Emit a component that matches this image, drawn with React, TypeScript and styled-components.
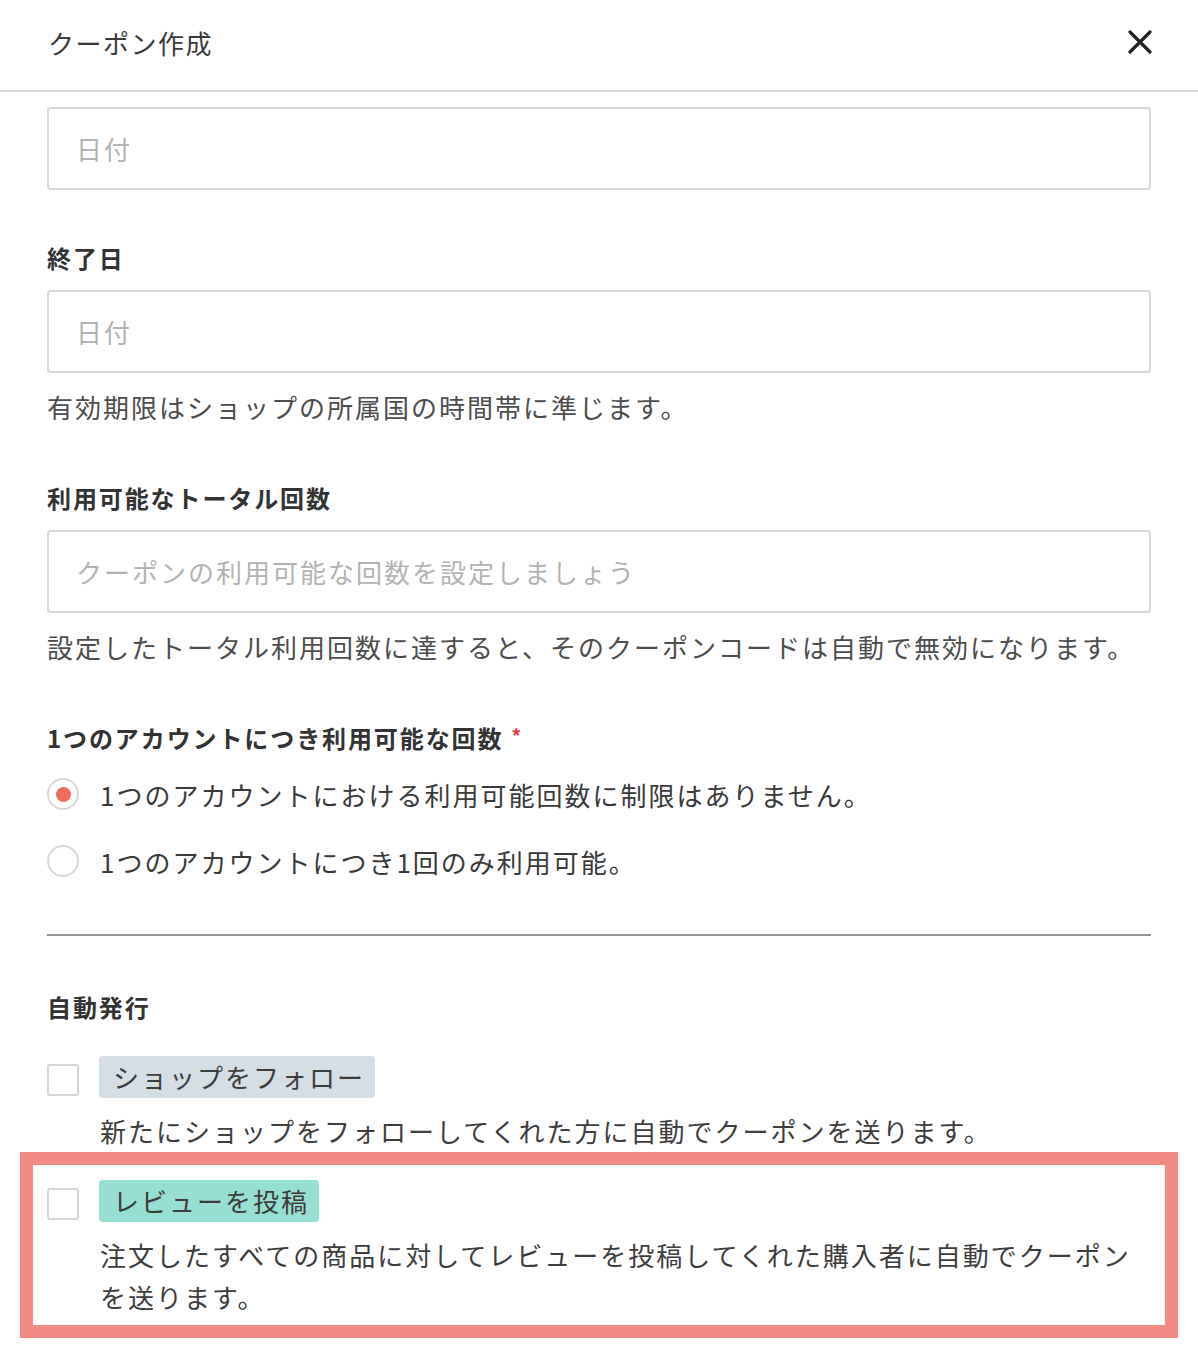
import React from "react";
import styled, { createGlobalStyle } from "styled-components";

const Global = createGlobalStyle`
  html, body { margin: 0; padding: 0; background: #ffffff; }
  body { font-family: "Noto Sans CJK JP", "Noto Sans", sans-serif; color: #333; }
  * { box-sizing: border-box; }
`;

const Page = styled.div`
  width: 1198px;
  min-height: 1364px;
  background: #fff;
`;

const Header = styled.header`
  height: 92px;
  display: flex;
  align-items: center;
  justify-content: space-between;
  padding: 0 46px 6px 48px;
  border-bottom: 2px solid #d6d6d6;
`;

const Title = styled.h1`
  margin: 0;
  font-size: 26px;
  font-weight: 400;
  letter-spacing: 1.5px;
  color: #3a3a3a;
`;

const CloseButton = styled.button`
  border: 0;
  background: none;
  padding: 0;
  width: 24px;
  height: 24px;
  display: flex;
  cursor: pointer;
`;

const Body = styled.main`
  padding: 15px 47px 0 47px;
  display: flex;
  flex-direction: column;
`;

const Input = styled.input`
  width: 100%;
  height: 83px;
  border: 2px solid #d8d8d8;
  border-radius: 4px;
  padding: 0 27px;
  font-family: inherit;
  font-size: 26px;
  letter-spacing: 2px;
  color: #333;
  outline: none;
  &::placeholder { color: #b3b3b3; }
`;

const Label = styled.div<{ $top: number }>`
  margin-top: ${(p) => p.$top}px;
  margin-bottom: 16px;
  font-size: 24px;
  line-height: 32px;
  font-weight: 700;
  letter-spacing: 1.9px;
  color: #333;
  display: flex;
  align-items: center;
`;

const Required = styled.span`
  color: #e8384f;
  font-size: 20px;
  line-height: 20px;
  margin: -4px 0 0 8px;
`;

const Help = styled.p`
  margin: 16px 0 0;
  font-size: 26px;
  line-height: 36px;
  letter-spacing: 2px;
  color: #4d4d4d;
`;

const RadioGroup = styled.div`
  display: flex;
  flex-direction: column;
  gap: 19px;
`;

const RadioRow = styled.label`
  height: 48px;
  display: flex;
  align-items: center;
  gap: 21px;
  font-size: 26px;
  letter-spacing: 2px;
  color: #3a3a3a;
`;

const RadioCircle = styled.span<{ $checked?: boolean }>`
  width: 32px;
  height: 32px;
  border-radius: 50%;
  border: 2px solid #d8d8d8;
  display: flex;
  align-items: center;
  justify-content: center;
  flex: none;
  &::after {
    content: "";
    width: 15px;
    height: 15px;
    border-radius: 50%;
    background: ${(p) => (p.$checked ? "#f06b5c" : "transparent")};
  }
`;

const Divider = styled.hr`
  margin: 49px 0 0;
  border: 0;
  height: 2px;
  background: #969696;
`;

const AutoItem = styled.div<{ $top: number }>`
  position: relative;
  margin-top: ${(p) => p.$top}px;
`;

const ItemHead = styled.div`
  display: flex;
  align-items: flex-start;
  gap: 20px;
`;

const Checkbox = styled.span`
  width: 32px;
  height: 32px;
  margin-top: 8px;
  border: 2px solid #d6d6d6;
  border-radius: 3px;
  background: #fff;
  flex: none;
`;

const Tag = styled.span<{ $bg: string }>`
  height: 42px;
  line-height: 42px;
  padding: 0 10px 0 14px;
  border-radius: 4px;
  background: ${(p) => p.$bg};
  font-size: 26px;
  letter-spacing: 2px;
  color: #3d3d3d;
`;

const Desc = styled.p`
  margin: 12px 0 0 53px;
  font-size: 26px;
  line-height: 42px;
  letter-spacing: 2px;
  color: #3d3d3d;
`;

const Highlight = styled.div`
  position: absolute;
  top: -28px;
  left: -27px;
  right: -27px;
  bottom: -20px;
  border: 13px solid #f08a82;
  pointer-events: none;
`;

export default function App() {
  return (
    <Page>
      <Global />
      <Header>
        <Title>クーポン作成</Title>
        <CloseButton aria-label="閉じる">
          <svg width="24" height="24" viewBox="0 0 24 24">
            <path d="M2 2 L22 22 M22 2 L2 22" stroke="#222" strokeWidth="3.2" strokeLinecap="round" />
          </svg>
        </CloseButton>
      </Header>
      <Body>
        <Input placeholder="日付" />

        <Label $top={52}>終了日</Label>
        <Input placeholder="日付" />
        <Help>有効期限はショップの所属国の時間帯に準じます。</Help>

        <Label $top={57}>利用可能なトータル回数</Label>
        <Input placeholder="クーポンの利用可能な回数を設定しましょう" />
        <Help>設定したトータル利用回数に達すると、そのクーポンコードは自動で無効になります。</Help>

        <Label $top={57}>
          1つのアカウントにつき利用可能な回数<Required>*</Required>
        </Label>
        <RadioGroup>
          <RadioRow>
            <RadioCircle $checked />
            1つのアカウントにおける利用可能回数に制限はありません。
          </RadioRow>
          <RadioRow>
            <RadioCircle />
            1つのアカウントにつき1回のみ利用可能。
          </RadioRow>
        </RadioGroup>

        <Divider />

        <Label $top={55}>自動発行</Label>
        <AutoItem $top={17}>
          <ItemHead>
            <Checkbox />
            <Tag $bg="#d5dee4">ショップをフォロー</Tag>
          </ItemHead>
          <Desc>新たにショップをフォローしてくれた方に自動でクーポンを送ります。</Desc>
        </AutoItem>
        <AutoItem $top={28}>
          <ItemHead>
            <Checkbox />
            <Tag $bg="#98dfd3">レビューを投稿</Tag>
          </ItemHead>
          <Desc>注文したすべての商品に対してレビューを投稿してくれた購入者に自動でクーポンを送ります。</Desc>
          <Highlight />
        </AutoItem>
      </Body>
    </Page>
  );
}
